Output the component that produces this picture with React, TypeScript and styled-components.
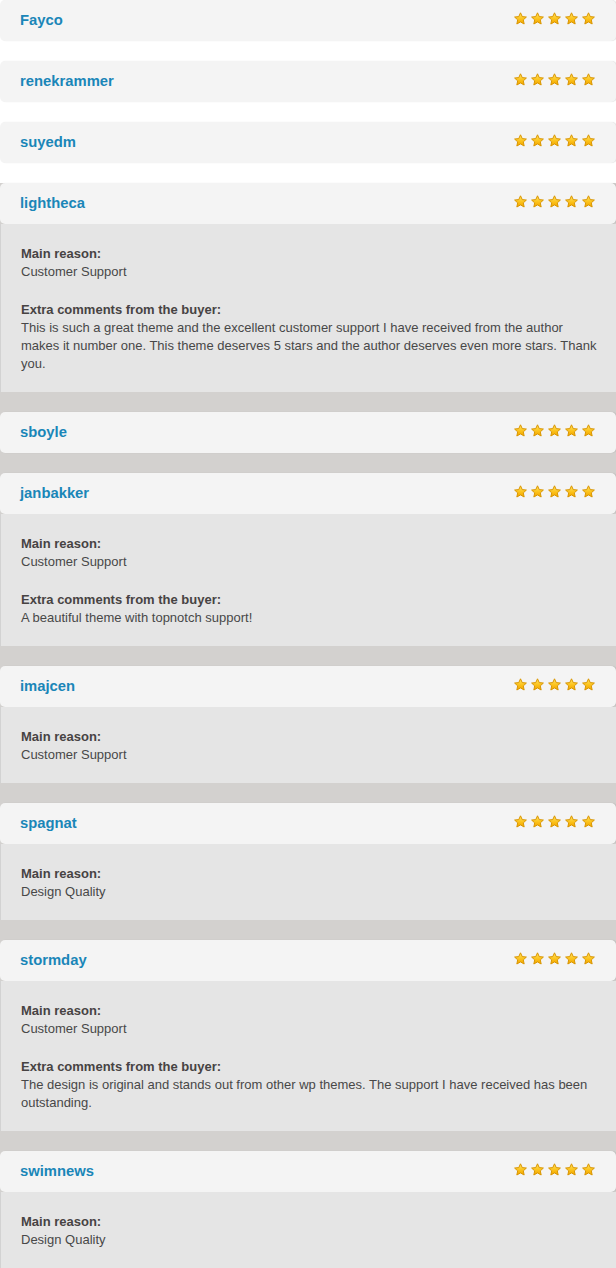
import styled, { createGlobalStyle } from 'styled-components';

const GlobalStyle = createGlobalStyle`
	html, body {
		margin: 0;
		padding: 0;
		background: #ffffff;
	}
	body {
		font-family: "Liberation Sans", Arial, sans-serif;
	}
`;

interface Review {
	user: string;
	reason?: string;
	comment?: string;
}

const topReviews: Review[] = [
	{ user: 'Fayco' },
	{ user: 'renekrammer' },
	{ user: 'suyedm' },
];

const reviews: Review[] = [
	{
		user: 'lightheca',
		reason: 'Customer Support',
		comment:
			'This is such a great theme and the excellent customer support I have received from the author makes it number one. This theme deserves 5 stars and the author deserves even more stars. Thank you.',
	},
	{ user: 'sboyle' },
	{
		user: 'janbakker',
		reason: 'Customer Support',
		comment: 'A beautiful theme with topnotch support!',
	},
	{ user: 'imajcen', reason: 'Customer Support' },
	{ user: 'spagnat', reason: 'Design Quality' },
	{
		user: 'stormday',
		reason: 'Customer Support',
		comment:
			'The design is original and stands out from other wp themes. The support I have received has been outstanding.',
	},
	{ user: 'swimnews', reason: 'Design Quality' },
];

const Page = styled.div`
	width: 616px;
	overflow: hidden;
`;

const ReviewList = styled.div<{ $tone: 'white' | 'grey' }>`
	display: flex;
	flex-direction: column;
	gap: 20px;
	padding-bottom: 20px;
	background: ${(p) => (p.$tone === 'grey' ? '#d3d1cf' : '#ffffff')};
`;

const ReviewCard = styled.div`
	display: flex;
	flex-direction: column;
`;

const ReviewHeader = styled.div`
	display: flex;
	align-items: center;
	justify-content: space-between;
	height: 41px;
	padding: 0 20px;
	box-sizing: border-box;
	background: #f4f4f4;
	border-radius: 5px;
	box-shadow: 1px 0 1px rgba(0, 0, 0, 0.12);
`;

const UserName = styled.a`
	font-size: 14.8px;
	font-weight: 700;
	color: #1a86b8;
	text-decoration: none;
	line-height: 18px;
	margin-top: -1px;
`;

const Stars = styled.div`
	display: flex;
	gap: 2px;
	margin-top: -4px;
`;

const ReviewBody = styled.div`
	display: flex;
	flex-direction: column;
	gap: 20px;
	padding: 21px 14px 19px 20px;
	background: #e5e5e5;
	border-left: 1px solid #d2d2d2;
	color: #4a4a4a;
	font-size: 13px;
	line-height: 18px;
`;

const Section = styled.div``;

const Label = styled.div`
	font-weight: 700;
	color: #474343;
`;

const Text = styled.div`
	color: #484848;
`;

const Star = () => (
	<svg width="15" height="14" viewBox="0 0 14 14">
		<defs>
			<linearGradient id="starFill" x1="0" y1="0" x2="0" y2="1">
				<stop offset="0" stopColor="#ffe666" />
				<stop offset="0.55" stopColor="#fcc21a" />
				<stop offset="1" stopColor="#f2a500" />
			</linearGradient>
		</defs>
		<path
			d="M7 0.8 L8.75 4.6 L12.9 5.05 L9.8 7.85 L10.65 12 L7 9.9 L3.35 12 L4.2 7.85 L1.1 5.05 L5.25 4.6 Z"
			fill="url(#starFill)"
			stroke="#d99500"
			strokeWidth="1"
			strokeLinejoin="round"
		/>
	</svg>
);

const ReviewItem = ({ review }: { review: Review }) => (
	<ReviewCard>
		<ReviewHeader>
			<UserName>{review.user}</UserName>
			<Stars>
				{[0, 1, 2, 3, 4].map((i) => (
					<Star key={i} />
				))}
			</Stars>
		</ReviewHeader>
		{review.reason && (
			<ReviewBody>
				<Section>
					<Label>Main reason:</Label>
					<Text>{review.reason}</Text>
				</Section>
				{review.comment && (
					<Section>
						<Label>Extra comments from the buyer:</Label>
						<Text>{review.comment}</Text>
					</Section>
				)}
			</ReviewBody>
		)}
	</ReviewCard>
);

export default function App() {
	return (
		<>
			<GlobalStyle />
			<Page>
				<ReviewList $tone="white">
					{topReviews.map((r) => (
						<ReviewItem key={r.user} review={r} />
					))}
				</ReviewList>
				<ReviewList $tone="grey">
					{reviews.map((r) => (
						<ReviewItem key={r.user} review={r} />
					))}
				</ReviewList>
			</Page>
		</>
	);
}
